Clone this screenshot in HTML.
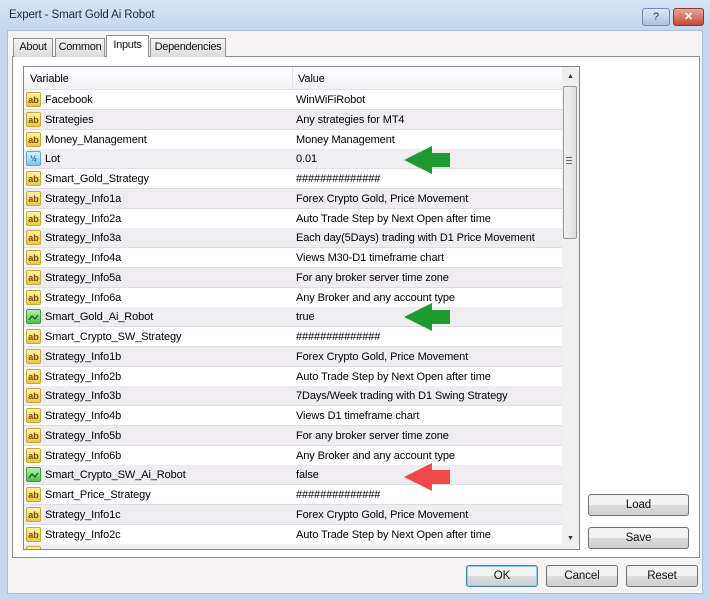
<!DOCTYPE html>
<html><head><meta charset="utf-8"><style>
*{margin:0;padding:0;box-sizing:border-box}
body{width:710px;height:600px;overflow:hidden;background:#c4d9ef;font-family:"Liberation Sans",sans-serif;font-size:11px;letter-spacing:-0.1px;color:#000;position:relative}
.abs{position:absolute}
.title{left:0;top:0;width:710px;height:30px;background:linear-gradient(#d6e5f5,#c2d7ee)}
.title span{position:absolute;left:9px;top:9px;font-size:11.5px;color:#1e2a3a}
.win{left:7px;top:30px;width:696px;height:564px;background:#f6f3f5;border:1px solid #a9bdd3}
.tab{top:38px;height:19px;background:linear-gradient(#f4f4f4,#dcdcdc);border:1px solid #8e8f8f;border-bottom:none;text-align:center;line-height:17px;color:#111;font-size:11px;letter-spacing:-0.3px;white-space:nowrap}
.panel{left:12px;top:56px;width:688px;height:502px;background:#fff;border:1px solid #8e8f8f}
.list{left:23px;top:66px;width:557px;height:484px;border:1px solid #828790;background:#fff;overflow:hidden}
.hdr{left:0;top:0;width:538px;height:23px;background:linear-gradient(#fff,#f1f2f6);border-bottom:1px solid #dde0e6}
.row{left:0;width:538px;height:20px;border-bottom:1px solid #dedde2;white-space:nowrap}
.g{background:#efedf1}
.row .n{position:absolute;left:21px;top:4px}
.row .v{position:absolute;left:272px;top:4px}
.ic{position:absolute;left:2px;top:2px;width:15px;height:15px;border-radius:2px;font-size:9px;font-weight:bold;line-height:14px;text-align:center;letter-spacing:0}
.ab{background:linear-gradient(#fff3a8,#e8c84a);border:1px solid #c9a83a;color:#7a4a00}
.bo{background:linear-gradient(#b9f0b0,#4cc14a);border:1px solid #3f9a3c}
.db{background:linear-gradient(#d8f1ff,#7cc7ee);border:1px solid #5fa8d4;color:#2060a0;font-size:8px}
.btn{height:22px;border:1px solid #707070;border-radius:3px;background:linear-gradient(#f2f2f2 50%,#dddddd 50%,#cfcfcf);text-align:center;line-height:20px;color:#111;font-size:11.5px}
</style></head><body>
<div class="abs title"><span>Expert - Smart Gold Ai Robot</span></div>
<div class="abs" style="left:642px;top:8px;width:28px;height:18px;border:1px solid #6d8bb0;border-radius:3px;background:linear-gradient(#dce8f4,#aac3df);text-align:center;color:#334;font-size:11px;line-height:16px">?</div>
<div class="abs" style="left:673px;top:8px;width:31px;height:18px;border:1px solid #8a3a30;border-radius:3px;background:linear-gradient(#e8a898,#c64a36);text-align:center;color:#fff;font-weight:bold;font-size:11px;line-height:16px">✕</div>
<div class="abs win"></div>
<div class="abs panel"></div>
<div class="abs tab" style="left:13px;width:40px">About</div>
<div class="abs tab" style="left:55px;width:50px">Common</div>
<div class="abs tab" style="left:106px;top:35px;height:22px;width:43px;background:#fff;line-height:18px">Inputs</div>
<div class="abs tab" style="left:150px;width:76px">Dependencies</div>
<div class="abs list">
<div class="abs hdr"><span class="abs" style="left:6px;top:6px">Variable</span><span class="abs" style="left:268px;top:0;width:1px;height:22px;background:#e3e4e8"></span><span class="abs" style="left:274px;top:6px">Value</span></div>
<div id="rows"></div>
<div class="abs" style="left:538px;top:0;width:17px;height:484px;background:#f0f0f0">
<div class="abs" style="left:5px;top:6px;font-size:7px;color:#333">▲</div>
<div class="abs" style="left:1px;top:19px;width:14px;height:153px;border:1px solid #979797;border-radius:2px;background:linear-gradient(90deg,#f0f0f0,#dedede)"></div>
<div class="abs" style="left:4px;top:90px;width:6px;height:7px;border-top:1px solid #666;border-bottom:1px solid #666"><div style="margin-top:2px;border-top:1px solid #666"></div></div>
<div class="abs" style="left:5px;top:468px;font-size:7px;color:#333">▼</div>
</div>
</div>
<div class="abs btn" style="left:588px;top:494px;width:101px">Load</div>
<div class="abs btn" style="left:588px;top:527px;width:101px">Save</div>
<div class="abs btn" style="left:466px;top:565px;width:72px;border-color:#3c7fb1;box-shadow:inset 0 0 0 1px #8fd0f0">OK</div>
<div class="abs btn" style="left:546px;top:565px;width:72px">Cancel</div>
<div class="abs btn" style="left:626px;top:565px;width:72px">Reset</div>
<svg class="abs" style="left:0;top:0" width="710" height="600">
<polygon points="404,160 432,146 432,153 450,153 450,167 432,167 432,174" fill="#1e9a2e"/>
<polygon points="404,317 432,303 432,310 450,310 450,324 432,324 432,331" fill="#1e9a2e"/>
<polygon points="404,477 432,463 432,470 450,470 450,484 432,484 432,491" fill="#f04848"/>
</svg>
<script>
var d=[["ab","Facebook","WinWiFiRobot"],["ab","Strategies","Any strategies for MT4"],["ab","Money_Management","Money Management"],["db","Lot","0.01"],["ab","Smart_Gold_Strategy","##############"],["ab","Strategy_Info1a","Forex Crypto Gold, Price Movement"],["ab","Strategy_Info2a","Auto Trade Step by Next Open after time"],["ab","Strategy_Info3a","Each day(5Days) trading with D1 Price Movement"],["ab","Strategy_Info4a","Views M30-D1 timeframe chart"],["ab","Strategy_Info5a","For any broker server time zone"],["ab","Strategy_Info6a","Any Broker and any account type"],["bo","Smart_Gold_Ai_Robot","true"],["ab","Smart_Crypto_SW_Strategy","##############"],["ab","Strategy_Info1b","Forex Crypto Gold, Price Movement"],["ab","Strategy_Info2b","Auto Trade Step by Next Open after time"],["ab","Strategy_Info3b","7Days/Week trading with D1 Swing Strategy"],["ab","Strategy_Info4b","Views D1 timeframe chart"],["ab","Strategy_Info5b","For any broker server time zone"],["ab","Strategy_Info6b","Any Broker and any account type"],["bo","Smart_Crypto_SW_Ai_Robot","false"],["ab","Smart_Price_Strategy","##############"],["ab","Strategy_Info1c","Forex Crypto Gold, Price Movement"],["ab","Strategy_Info2c","Auto Trade Step by Next Open after time"],["ab","Strategy_Info3c",""]];
var h="";
d.forEach(function(r,i){var t=23+i*19.75;var ic=r[0]=="ab"?"ab":r[0]=="db"?"½":"<svg width='13' height='13'><path d='M2 10 L5 6 L8 9 L11 5' stroke='#1a5a1a' stroke-width='1.3' fill='none'/></svg>";
h+='<div class="abs row'+(i%2?' g':'')+'" style="top:'+t+'px"><span class="ic '+r[0]+'">'+ic+'</span><span class="n">'+r[1]+'</span><span class="v">'+r[2]+'</span></div>';});
document.getElementById("rows").innerHTML=h;
</script>
</body></html>
